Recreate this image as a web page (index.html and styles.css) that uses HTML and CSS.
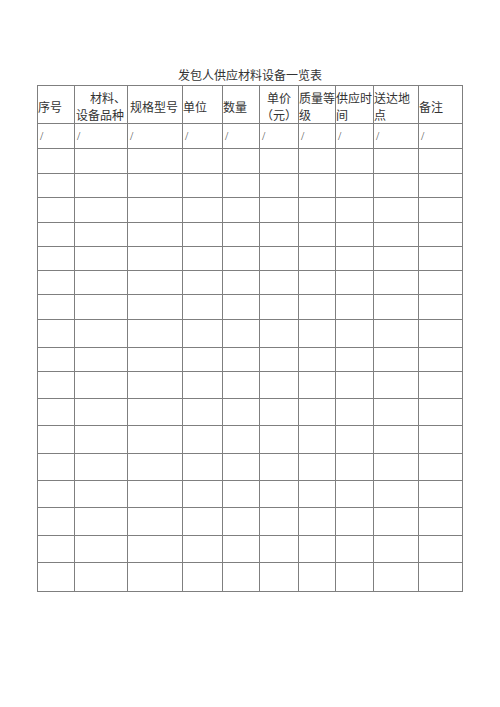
FILE: index.html
```html
<!DOCTYPE html>
<html lang="zh-CN">
<head>
<meta charset="utf-8">
<title>发包人供应材料设备一览表</title>
<link rel="stylesheet" href="styles.css">
</head>
<body>
<div class="page">
  <h1 class="title">发包人供应材料设备一览表</h1>
  <div class="sheet">
    <div class="c h">序号</div>
    <div class="c h ind">材料、<br>设备品种</div>
    <div class="c h wide">规格型号</div>
    <div class="c h">单位</div>
    <div class="c h">数量</div>
    <div class="c h mid">单价<br>（元）</div>
    <div class="c h">质量等<br>级</div>
    <div class="c h">供应时<br>间</div>
    <div class="c h">送达地<br>点</div>
    <div class="c h">备注</div>

    <div class="c s">/</div><div class="c s">/</div><div class="c s">/</div><div class="c s">/</div><div class="c s">/</div><div class="c s">/</div><div class="c s">/</div><div class="c s">/</div><div class="c s">/</div><div class="c s">/</div>

    <div class="c"></div><div class="c"></div><div class="c"></div><div class="c"></div><div class="c"></div><div class="c"></div><div class="c"></div><div class="c"></div><div class="c"></div><div class="c"></div>
    <div class="c"></div><div class="c"></div><div class="c"></div><div class="c"></div><div class="c"></div><div class="c"></div><div class="c"></div><div class="c"></div><div class="c"></div><div class="c"></div>
    <div class="c"></div><div class="c"></div><div class="c"></div><div class="c"></div><div class="c"></div><div class="c"></div><div class="c"></div><div class="c"></div><div class="c"></div><div class="c"></div>
    <div class="c"></div><div class="c"></div><div class="c"></div><div class="c"></div><div class="c"></div><div class="c"></div><div class="c"></div><div class="c"></div><div class="c"></div><div class="c"></div>
    <div class="c"></div><div class="c"></div><div class="c"></div><div class="c"></div><div class="c"></div><div class="c"></div><div class="c"></div><div class="c"></div><div class="c"></div><div class="c"></div>
    <div class="c"></div><div class="c"></div><div class="c"></div><div class="c"></div><div class="c"></div><div class="c"></div><div class="c"></div><div class="c"></div><div class="c"></div><div class="c"></div>
    <div class="c"></div><div class="c"></div><div class="c"></div><div class="c"></div><div class="c"></div><div class="c"></div><div class="c"></div><div class="c"></div><div class="c"></div><div class="c"></div>
    <div class="c"></div><div class="c"></div><div class="c"></div><div class="c"></div><div class="c"></div><div class="c"></div><div class="c"></div><div class="c"></div><div class="c"></div><div class="c"></div>
    <div class="c"></div><div class="c"></div><div class="c"></div><div class="c"></div><div class="c"></div><div class="c"></div><div class="c"></div><div class="c"></div><div class="c"></div><div class="c"></div>
    <div class="c"></div><div class="c"></div><div class="c"></div><div class="c"></div><div class="c"></div><div class="c"></div><div class="c"></div><div class="c"></div><div class="c"></div><div class="c"></div>
    <div class="c"></div><div class="c"></div><div class="c"></div><div class="c"></div><div class="c"></div><div class="c"></div><div class="c"></div><div class="c"></div><div class="c"></div><div class="c"></div>
    <div class="c"></div><div class="c"></div><div class="c"></div><div class="c"></div><div class="c"></div><div class="c"></div><div class="c"></div><div class="c"></div><div class="c"></div><div class="c"></div>
    <div class="c"></div><div class="c"></div><div class="c"></div><div class="c"></div><div class="c"></div><div class="c"></div><div class="c"></div><div class="c"></div><div class="c"></div><div class="c"></div>
    <div class="c"></div><div class="c"></div><div class="c"></div><div class="c"></div><div class="c"></div><div class="c"></div><div class="c"></div><div class="c"></div><div class="c"></div><div class="c"></div>
    <div class="c"></div><div class="c"></div><div class="c"></div><div class="c"></div><div class="c"></div><div class="c"></div><div class="c"></div><div class="c"></div><div class="c"></div><div class="c"></div>
    <div class="c"></div><div class="c"></div><div class="c"></div><div class="c"></div><div class="c"></div><div class="c"></div><div class="c"></div><div class="c"></div><div class="c"></div><div class="c"></div>
    <div class="c"></div><div class="c"></div><div class="c"></div><div class="c"></div><div class="c"></div><div class="c"></div><div class="c"></div><div class="c"></div><div class="c"></div><div class="c"></div>
  </div>
</div>
</body>
</html>
```

FILE: styles.css
```css
html, body {
  margin: 0;
  padding: 0;
  background: #ffffff;
}

body {
  font-family: "Noto Sans CJK SC", "Noto Sans", sans-serif;
  color: #333333;
}

.page {
  width: 426px;
  padding: 67px 0 0 37px;
}

.title {
  margin: 0 0 2px 0;
  font-size: 12px;
  line-height: 16px;
  font-weight: 400;
  text-align: center;
  color: #333333;
}

.sheet {
  display: grid;
  grid-template-columns: 36px 52px 54px 39px 36px 38px 36px 37px 44px 43px;
  grid-template-rows: 37px 24px 24px 23px 24px 23px 23px 23px 24px 27px 23px 26px 26px 27px 26px 26px 27px 26px 28px;
  gap: 1px;
  padding: 1px;
  width: 424px;
  background: #7f7f7f;
}

.c {
  background: #ffffff;
  font-size: 12px;
  font-weight: 400;
  line-height: 17px;
  white-space: nowrap;
  overflow: hidden;
}

.h {
  display: flex;
  flex-direction: column;
  justify-content: center;
  padding: 3px 0 0 0;
  text-align: left;
}

.h.ind {
  text-indent: 14px;
  padding-left: 1px;
}

.h.wide {
  padding-left: 2px;
}

.h.mid {
  text-align: center;
}

.s {
  display: flex;
  align-items: center;
  padding-left: 2px;
  font-family: "Liberation Serif", serif;
  font-size: 12px;
  color: #555555;
}
```
